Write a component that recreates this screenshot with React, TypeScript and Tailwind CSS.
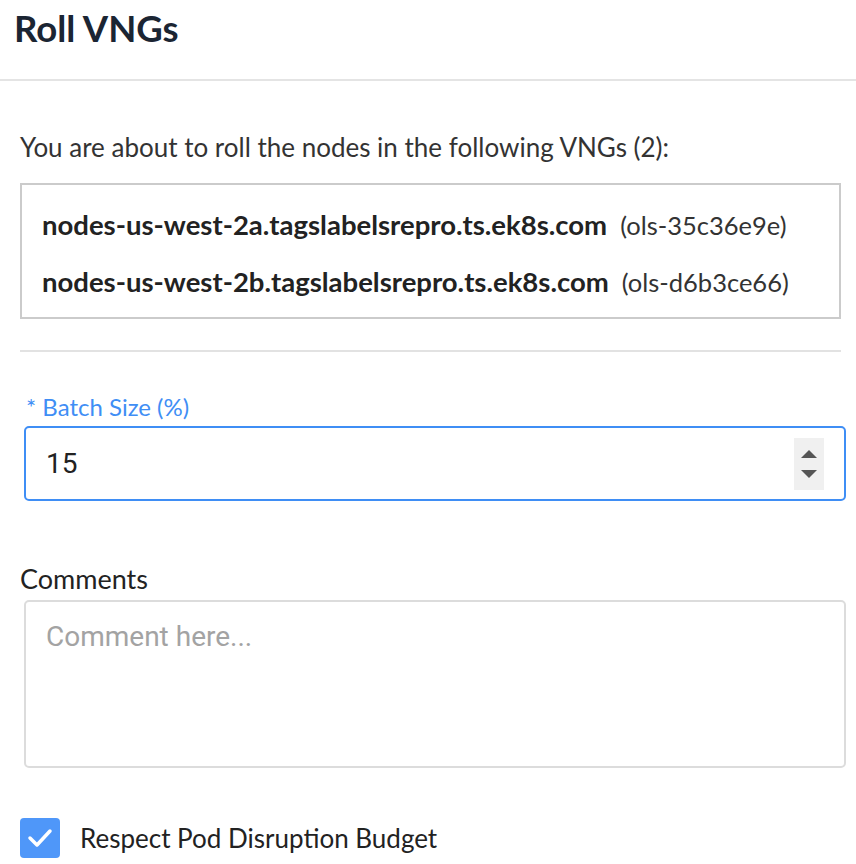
import React from "react";

const SANS = { fontFamily: "Lato, 'Open Sans', sans-serif" };
const ROBOTO = { fontFamily: "Roboto, sans-serif" };

export default function App() {
  return (
    <div className="w-[856px] h-[864px] overflow-hidden bg-white text-[#333]" style={SANS}>
      <div className="h-[81px] border-b-2 border-[#e4e4e4] px-[14px] pt-[6px]">
        <h1 className="text-[36.5px] font-bold leading-[44px] text-[#1b2533]">Roll VNGs</h1>
      </div>
      <div className="pl-[20px] pr-[15px] pt-[50px]">
        <p className="text-[26px] leading-[32px] text-[#333]">
          You are about to roll the nodes in the following VNGs (2):
        </p>
        <div className="mt-[20px] h-[136px] border-2 border-[#cbcbcb] px-[20px] pt-[24px] flex flex-col gap-[25px]">
          {[
            ["nodes-us-west-2a.tagslabelsrepro.ts.ek8s.com", "(ols-35c36e9e)"],
            ["nodes-us-west-2b.tagslabelsrepro.ts.ek8s.com", "(ols-d6b3ce66)"],
          ].map(([n, id]) => (
            <div key={n} className="flex items-baseline gap-[13px] leading-[32px] text-[#222]">
              <span className="font-bold text-[27.5px]">{n}</span>
              <span className="text-[#333] text-[25.5px]">{id}</span>
            </div>
          ))}
        </div>
        <div className="mt-[31px] h-[2px] bg-[#e2e2e2]" />
        <div className="mt-[40px] pl-[6px] text-[24px] leading-[30px] text-[#3f8ef5]">* Batch Size (%)</div>
        <div className="mt-[4px] ml-[4px] mr-[-5px] h-[75px] rounded-[5px] border-2 border-[#3f8ef5] flex items-center pl-[20px] pr-[20px]">
          <span className="flex-1 text-[28px] text-[#222]" style={ROBOTO}>15</span>
          <div className="w-[30px] h-[52px] bg-[#f0f0f0] flex flex-col items-center justify-center gap-[12px]">
            <svg width="16" height="8" viewBox="0 0 16 8"><path d="M0 8 L8 0 L16 8 Z" fill="#555" /></svg>
            <svg width="16" height="8" viewBox="0 0 16 8"><path d="M0 0 L16 0 L8 8 Z" fill="#555" /></svg>
          </div>
        </div>
        <div className="mt-[62px] text-[27px] leading-[32px] text-[#222]">Comments</div>
        <div className="mt-[5px] ml-[4px] mr-[-5px] h-[168px] rounded-[5px] border-2 border-[#dcdcdc] pl-[20px] pt-[14px]">
          <span className="text-[28px] text-[#a3a3a3]" style={ROBOTO}>Comment here...</span>
        </div>
        <div className="mt-[50px] flex items-center gap-[20px]">
          <div className="w-[40px] h-[40px] rounded-[4px] bg-[#4f97f9] flex items-center justify-center">
            <svg width="26" height="20" viewBox="0 0 26 20" fill="none">
              <path d="M3 10 L10 17 L23 3" stroke="white" strokeWidth="3.5" strokeLinecap="round" strokeLinejoin="round" />
            </svg>
          </div>
          <span className="text-[26px] leading-[32px] text-[#222]">Respect Pod Disruption Budget</span>
        </div>
      </div>
    </div>
  );
}
